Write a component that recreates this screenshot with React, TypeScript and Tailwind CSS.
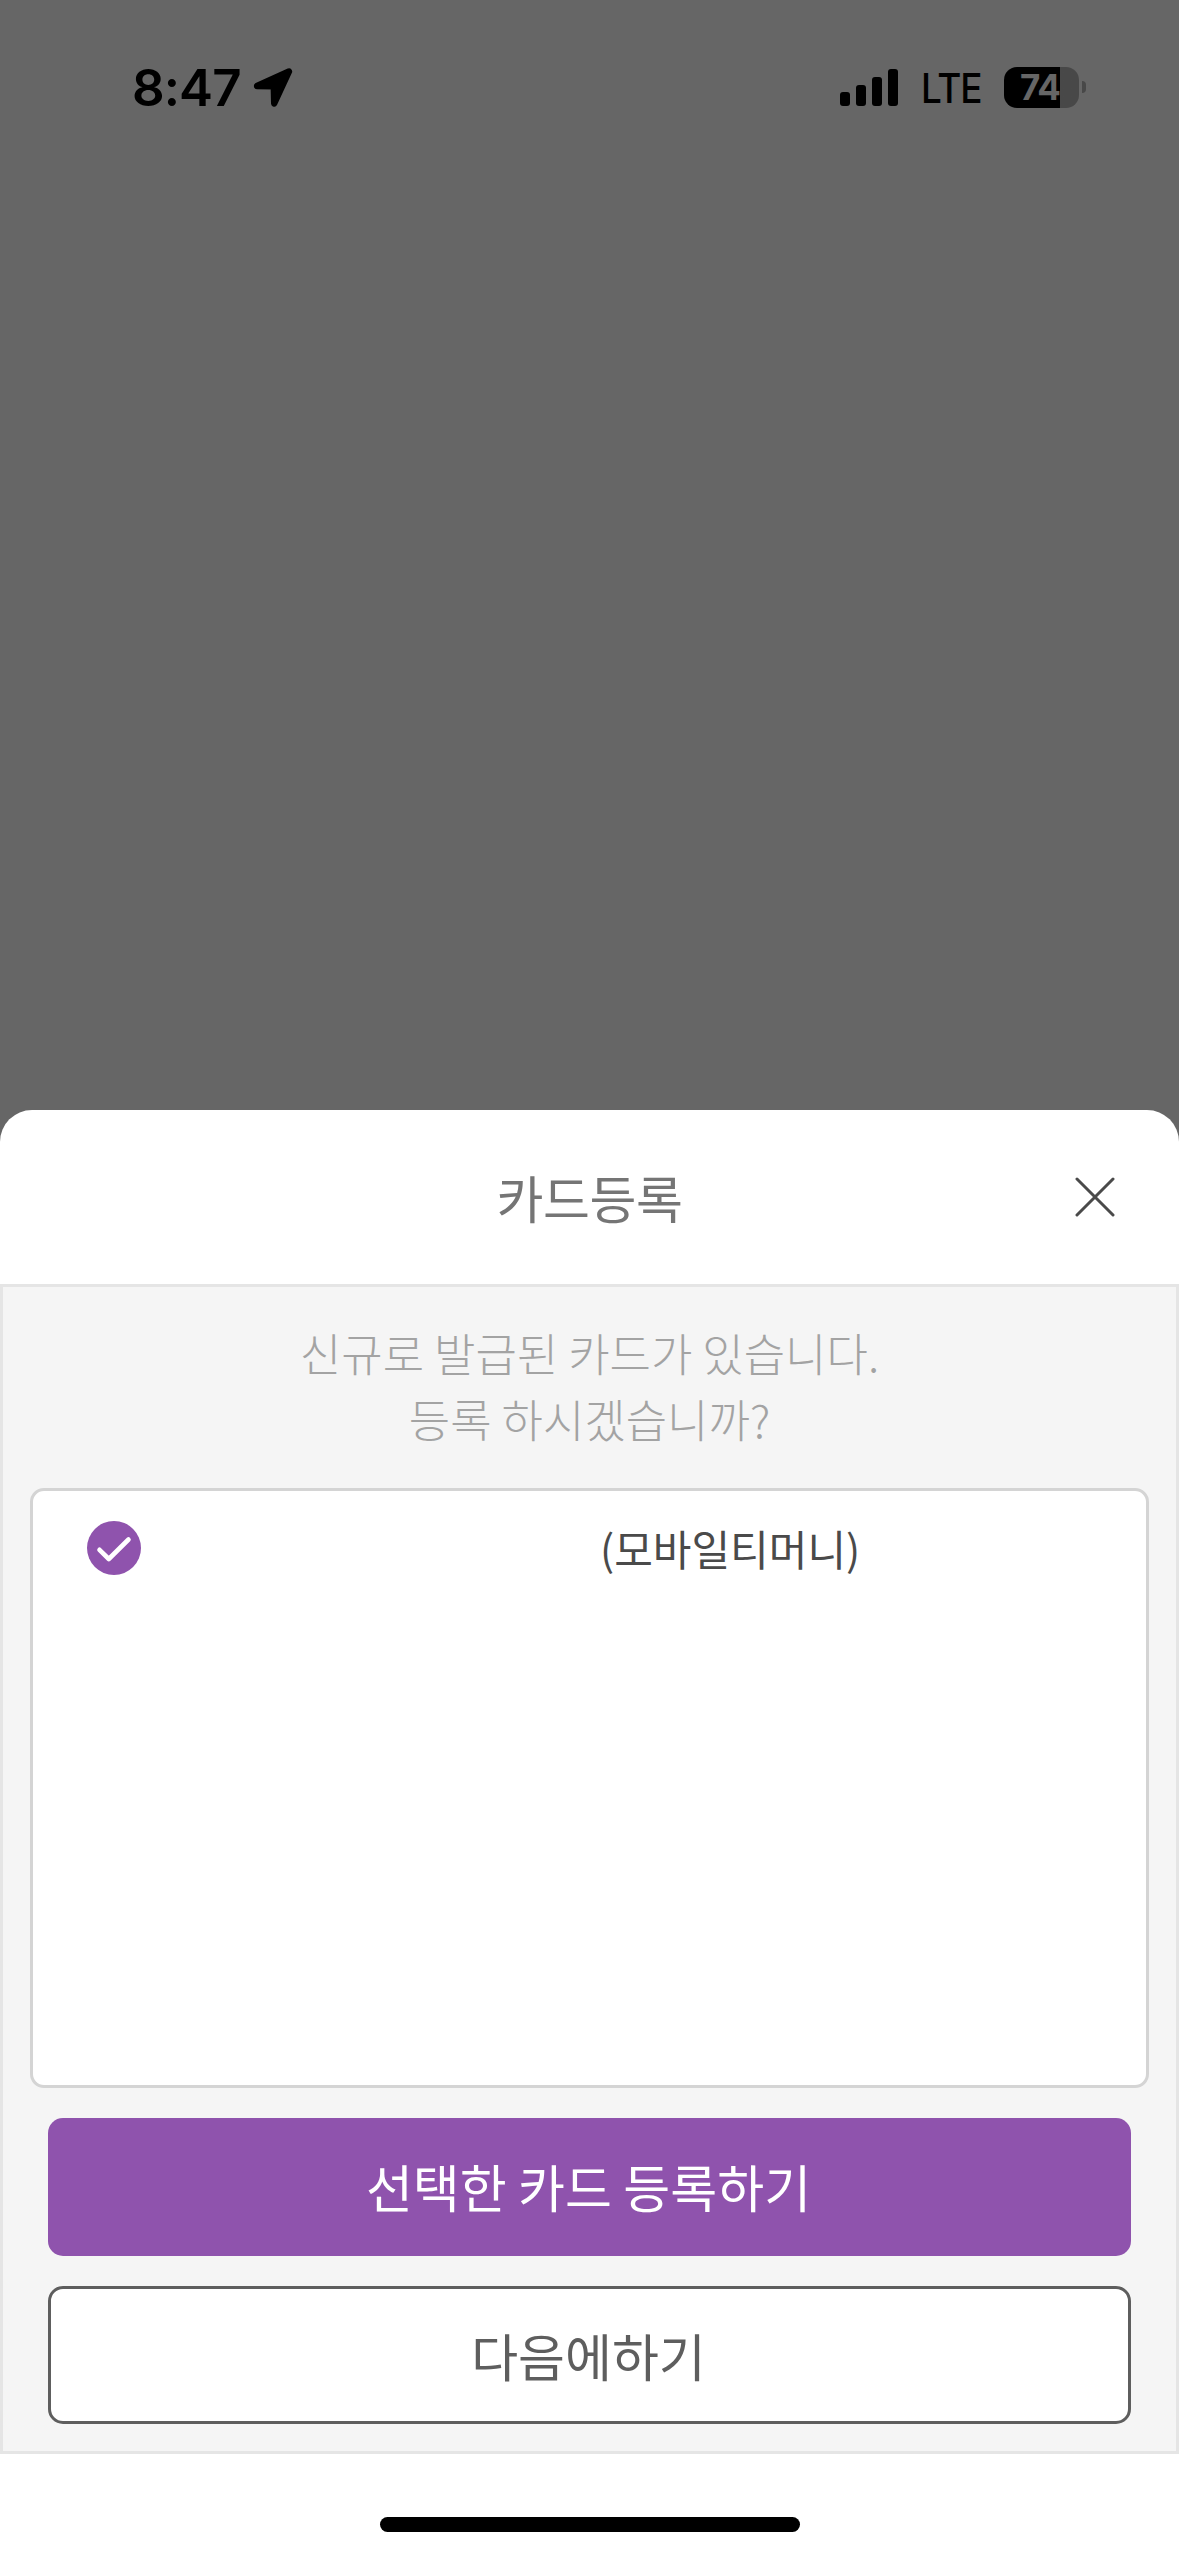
// App.tsx
import { useState } from "react";

const cards = [{ id: 1, number: "", type: "(모바일티머니)" }];

function StatusBar() {
  return (
    <div className="flex h-[176px] items-start justify-between pl-[132px] pr-[93px] font-['Inter',sans-serif] text-black">
      {/* เวลา + location */}
      <div className="flex items-center pt-[57px]">
        <span className="w-[121px] text-[51px] font-semibold leading-[62px] tracking-[-0.9px]">8:47</span>
        <svg width="40" height="40" viewBox="0 0 40 40">
          <path
            d="M36 3.5 L21.2 35.5 L20.8 18.4 L4 18 Z"
            fill="black"
            stroke="black"
            strokeWidth="6.4"
            strokeLinejoin="round"
          />
        </svg>
      </div>

      <div className="flex h-[107px] items-center pt-[67px]">
        <div className="flex h-[37px] items-end gap-[6px]">
          <div className="h-[14px] w-[10px] rounded-[3px] bg-black"></div>
          <div className="h-[21px] w-[10px] rounded-[3px] bg-black"></div>
          <div className="h-[29px] w-[10px] rounded-[3px] bg-black"></div>
          <div className="h-[37px] w-[10px] rounded-[3px] bg-black"></div>
        </div>
        <span className="ml-[23px] w-[83px] origin-left scale-x-90 pt-[2px] text-[41px] font-medium leading-[42px] tracking-[-1.3px]">
          LTE
        </span>
        <div className="flex h-[41px] w-[75px] items-center justify-center overflow-hidden rounded-[13px] bg-linear-to-r from-black from-[56px] to-[#484848] to-[56px] pr-[3px]">
          <span className="text-[35px] font-bold leading-none tracking-[-1px] text-[#666666]">74</span>
        </div>
        <div className="ml-[3px] h-[12px] w-[4px] rounded-r-full bg-[#484848]"></div>
      </div>
    </div>
  );
}

export default function App() {
  const [selected, setSelected] = useState(1);

  return (
    <div className="flex h-[2556px] w-[1179px] flex-col justify-between overflow-hidden bg-[#666666] font-['Noto_Sans_CJK_KR',sans-serif]">
      <StatusBar />

      {/* Bottom sheet */}
      <div className="flex h-[1446px] flex-col rounded-t-[32px] bg-white">
        <div className="flex h-[174px] items-center justify-between px-[64px]">
          <div className="w-[40px]"></div>
          <h1 className="pb-[1px] text-[51px] leading-[76px] tracking-[-0.4px] text-[#757575]">카드등록</h1>
          <button className="w-[40px]">
            <svg width="40" height="40" viewBox="0 0 40 40" fill="none">
              <path d="M2 2 L38 38 M38 2 L2 38" stroke="#4a4a4a" strokeWidth="3" strokeLinecap="round" />
            </svg>
          </button>
        </div>

        <div className="flex h-[1170px] flex-col border-[3px] border-[#e5e5e5] bg-[#f5f5f5] px-[27px] pt-[33px]">
          <p className="h-[168px] text-center text-[45px] font-light leading-[66px] text-[#a3a3a3]">
            신규로 발급된 카드가 있습니다.
            <br />
            등록 하시겠습니까?
          </p>

          <div className="h-[600px] rounded-[14px] border-[3px] border-[#d4d4d4] bg-white pt-[30px]">
            {cards.map((card) => (
              <div key={card.id} className="flex h-[54px] items-center pl-[54px]" onClick={() => setSelected(card.id)}>
                <svg width="54" height="54" viewBox="0 0 54 54" fill="none">
                  <circle cx="27" cy="27" r="27" fill={selected === card.id ? "#8f53ad" : "#d4d4d4"} />
                  <path
                    d="M12.5 28.8 L21.8 38 L41.5 18.5"
                    stroke="white"
                    strokeWidth="4.6"
                    strokeLinecap="round"
                    strokeLinejoin="round"
                  />
                </svg>
                <span className="w-[459px]">{card.number}</span>
                <span className="text-[42px] leading-[54px] text-[#4a4a4a]">{card.type}</span>
              </div>
            ))}
          </div>

          <div className="flex flex-col gap-[30px] px-[18px] pt-[30px] text-[51px] leading-[76px]">
            <button className="h-[138px] rounded-[15px] bg-[#8f53ad] pr-[2px] pb-[2px] text-white">
              선택한 카드 등록하기
            </button>
            <button className="h-[138px] rounded-[15px] border-[3px] border-[#5e5e5e] bg-white pr-[2px] pb-[1px] text-[#5e5e5e]">
              다음에하기
            </button>
          </div>
        </div>

        {/* Home indicator */}
        <div className="mx-auto mt-[63px] h-[15px] w-[420px] rounded-full bg-black"></div>
      </div>
    </div>
  );
}
